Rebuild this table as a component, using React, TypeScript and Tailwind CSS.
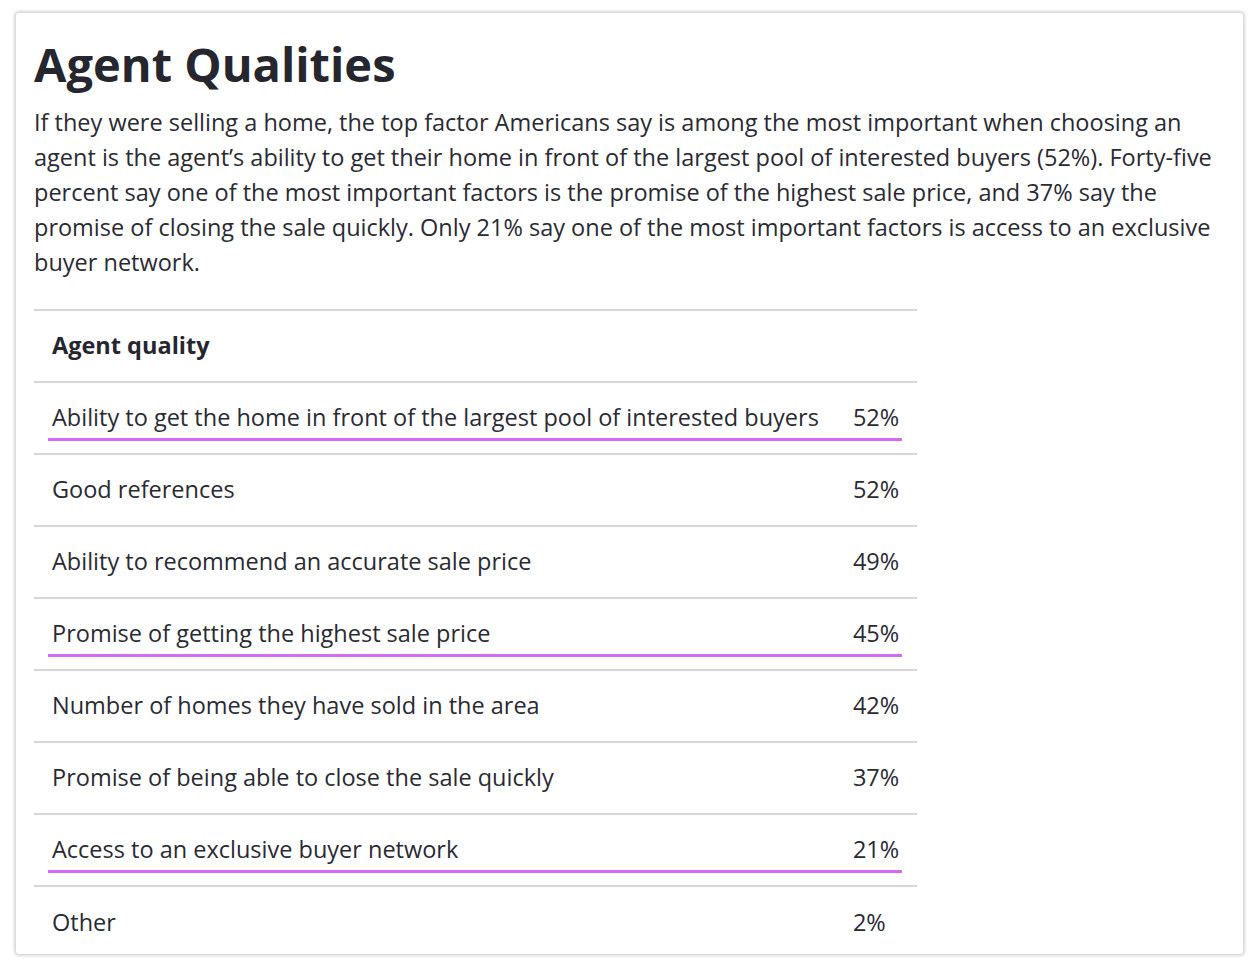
import React from 'react';

const rows: { label: string; value: string; highlight?: boolean }[] = [
  { label: 'Ability to get the home in front of the largest pool of interested buyers', value: '52%', highlight: true },
  { label: 'Good references', value: '52%' },
  { label: 'Ability to recommend an accurate sale price', value: '49%' },
  { label: 'Promise of getting the highest sale price', value: '45%', highlight: true },
  { label: 'Number of homes they have sold in the area', value: '42%' },
  { label: 'Promise of being able to close the sale quickly', value: '37%' },
  { label: 'Access to an exclusive buyer network', value: '21%', highlight: true },
  { label: 'Other', value: '2%' },
];

export default function App() {
  return (
    <div className="min-h-[972px] bg-white pt-[13px] pl-[16px]" style={{ fontFamily: '"Open Sans", "Noto Sans", sans-serif' }}>
      <div className="w-[1227px] h-[941px] overflow-hidden rounded-[3px] bg-white px-[18px] pt-[22px] text-[#26262f] shadow-[0_0_3px_2px_rgba(0,0,0,0.16)]">
        <h1 className="text-[47px] font-bold leading-[58px]">Agent Qualities</h1>
        <p className="mt-[12px] text-[23.5px] leading-[35px] text-[#2a2a33]">
          If they were selling a home, the top factor Americans say is among the most important when choosing an
          agent is the agent’s ability to get their home in front of the largest pool of interested buyers (52%). Forty-five
          percent say one of the most important factors is the promise of the highest sale price, and 37% say the
          promise of closing the sale quickly. Only 21% say one of the most important factors is access to an exclusive
          buyer network.
        </p>

        <table className="mt-[29px] border-collapse text-[23.5px] text-[#2a2a33]">
          <thead>
            <tr className="border-t-2 border-[#d6d6d6]">
              <th className="h-[72px] px-[18px] text-left font-bold text-[#26262f]">Agent quality</th>
              <th className="h-[72px] pl-[16px] pr-[18px]"></th>
            </tr>
          </thead>
          <tbody>
            {rows.map((row) => (
              <tr key={row.label} className="border-t-2 border-[#d6d6d6]">
                <td className="relative h-[72px] pl-[18px] pr-[18px] text-left">
                  {row.label}
                  {row.highlight && (
                    <span className="absolute bottom-[12px] left-[14px] right-0 h-[3px] bg-[#d66bf2]" />
                  )}
                </td>
                <td className="relative h-[72px] pl-[16px] pr-[18px] text-left">
                  {row.value}
                  {row.highlight && (
                    <span className="absolute bottom-[12px] left-0 right-[15px] h-[3px] bg-[#d66bf2]" />
                  )}
                </td>
              </tr>
            ))}
          </tbody>
        </table>
      </div>
    </div>
  );
}
